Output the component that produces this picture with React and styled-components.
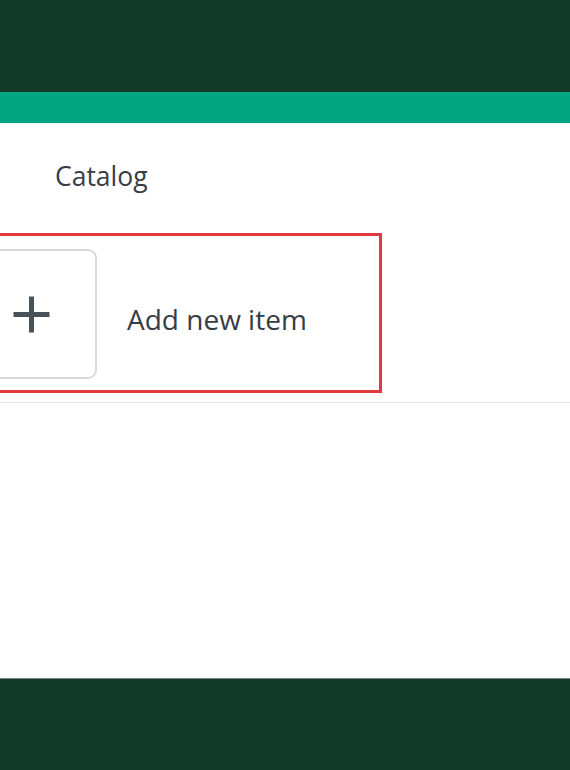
import React from "react";
import styled, { createGlobalStyle } from "styled-components";

const Global = createGlobalStyle`
  html, body { margin: 0; padding: 0; height: 100%; }
  body { font-family: "Open Sans", "Noto Sans", sans-serif; background: #ffffff; overflow: hidden; }
  #root { height: 100%; }
`;

const Page = styled.div`
  height: 770px;
  display: flex;
  flex-direction: column;
`;

const TopBand = styled.header`
  height: 92px;
  background: #133a29;
  flex-shrink: 0;
`;

const AccentBar = styled.div`
  height: 31px;
  background: #03a582;
  flex-shrink: 0;
`;

const Main = styled.main`
  flex: 1;
  background: #ffffff;
  display: flex;
  flex-direction: column;
  overflow: hidden;
`;

const Title = styled.h1`
  margin: 0;
  padding: 35px 0 0 55px;
  height: 72px;
  box-sizing: border-box;
  font-size: 26.5px;
  font-weight: 400;
  color: #383d45;
  line-height: 36px;
`;

const Section = styled.section`
  border-bottom: 1px solid #e6e6e6;
  padding-bottom: 9px;
  margin-top: 38px;
`;

const Highlight = styled.div`
  margin-left: -50px;
  width: 432px;
  box-sizing: border-box;
  border: 3px solid #e1393e;
  padding: 13px 0 11px 13px;
  display: flex;
  align-items: center;
  gap: 30px;
`;

const AddTile = styled.button`
  width: 131px;
  height: 130px;
  box-sizing: border-box;
  border: 2px solid #d9d9d9;
  border-radius: 9px;
  background: #ffffff;
  display: flex;
  align-items: center;
  justify-content: center;
  padding: 0;
  cursor: pointer;
`;

const Label = styled.span`
  font-size: 28px;
  color: #383d45;
  margin-top: 10px;
`;

const Spacer = styled.div`
  flex: 1;
`;

const BottomBand = styled.footer`
  height: 92px;
  background: #133a29;
  border-top: 1px solid #6f8a7d;
  box-sizing: border-box;
  flex-shrink: 0;
`;

export default function App() {
  return (
    <>
      <Global />
      <Page>
        <TopBand />
        <AccentBar />
        <Main>
          <Title>Catalog</Title>
          <Section>
            <Highlight>
              <AddTile aria-label="Add new item">
                <svg width="37" height="37" viewBox="0 0 37 37">
                  <path d="M18.5 0.5v36M0.5 18.5h36" stroke="#48525a" strokeWidth="5" fill="none" />
                </svg>
              </AddTile>
              <Label>Add new item</Label>
            </Highlight>
          </Section>
          <Spacer />
        </Main>
        <BottomBand />
      </Page>
    </>
  );
}
